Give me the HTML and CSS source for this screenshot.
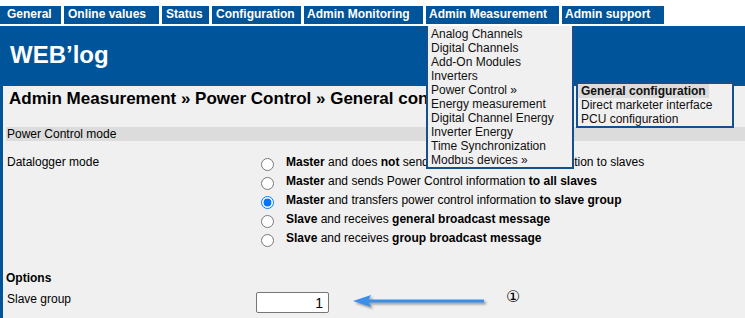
FILE: index.html
```html
<!DOCTYPE html>
<html>
<head>
<meta charset="utf-8">
<title>WEB'log</title>
<link rel="stylesheet" href="styles.css">
</head>
<body>
<nav class="tabs">
  <div class="tab t-general">General</div>
  <div class="tab t-online">Online values</div>
  <div class="tab t-status">Status</div>
  <div class="tab t-config">Configuration</div>
  <div class="tab t-monitor">Admin Monitoring</div>
  <div class="tab t-measure">Admin Measurement
    <ul class="menu">
      <li>Analog Channels</li>
      <li>Digital Channels</li>
      <li>Add-On Modules</li>
      <li>Inverters</li>
      <li class="has-sub">Power Control »
        <ul class="submenu">
          <li><span class="active">General configuration</span></li>
          <li>Direct marketer interface</li>
          <li>PCU configuration</li>
        </ul>
      </li>
      <li>Energy measurement</li>
      <li>Digital Channel Energy</li>
      <li>Inverter Energy</li>
      <li>Time Synchronization</li>
      <li>Modbus devices »</li>
    </ul>
  </div>
  <div class="tab t-support">Admin support</div>
</nav>
<div class="frame">
  <div class="brand">WEB’log</div>
  <main class="panel">
    <h1 class="title">Admin Measurement » Power Control » General configuration</h1>
    <div class="section">Power Control mode</div>
    <div class="field">
      <div class="label">Datalogger mode</div>
      <div class="options">
        <label class="opt"><input type="radio" name="mode"><span><b>Master</b> and does <b>not</b> send any Power Control information to slaves</span></label>
        <label class="opt"><input type="radio" name="mode"><span><b>Master</b> and sends Power Control information <b>to all slaves</b></span></label>
        <label class="opt"><input type="radio" name="mode" checked><span><b>Master</b> and transfers power control information <b>to slave group</b></span></label>
        <label class="opt"><input type="radio" name="mode"><span><b>Slave</b> and receives <b>general broadcast message</b></span></label>
        <label class="opt"><input type="radio" name="mode"><span><b>Slave</b> and receives <b>group broadcast message</b></span></label>
      </div>
    </div>
    <div class="subhead">Options</div>
    <div class="field">
      <div class="label">Slave group</div>
      <div class="value"><input class="num" type="text" value="1"></div>
    </div>
    <svg class="arrow" width="140" height="22" viewBox="0 0 140 22">
      <rect x="18" y="9.5" width="116" height="3" fill="#3b8fe8"/>
      <polygon points="3,11 21,5 18,11 21,17" fill="#3b8fe8"/>
    </svg>
    <span class="note">①</span>
  </main>
</div>
</body>
</html>
```

FILE: styles.css
```css
html, body {
  margin: 0;
  padding: 0;
  background: #ffffff;
  font-family: "Liberation Sans", Arial, sans-serif;
  font-size: 12px;
  color: #000;
  overflow: hidden;
}

.tabs {
  position: relative;
  z-index: 10;
  display: flex;
  gap: 3px;
  margin-top: 6px;
  height: 18px;
  margin-bottom: 2px;
}

.tab {
  position: relative;
  box-sizing: border-box;
  height: 18px;
  line-height: 16px;
  padding: 0 0 2px 4px;
  background: #00549a;
  color: #fff;
  font-weight: bold;
  white-space: nowrap;
}

.t-general { width: 61px; padding-left: 7px; }
.t-online { width: 95px; }
.t-status { width: 47px; }
.t-config { width: 89px; }
.t-monitor { width: 119px; padding-left: 3px; }
.t-measure { width: 133px; padding-left: 3px; }
.t-support { width: 102px; padding-left: 3px; }

.menu {
  position: absolute;
  top: 20px;
  left: 0;
  width: 144px;
  margin: 0;
  padding: 1px 0 0 0;
  list-style: none;
  background: #f0f0f0;
  border: 2px solid #14508f;
  border-top: 0;
  color: #111;
  font-weight: normal;
}

.menu li {
  position: relative;
  padding-left: 3px;
  line-height: normal;
}

.submenu {
  position: absolute;
  top: -1px;
  left: calc(100% + 4px);
  width: 154px;
  margin: 0;
  padding: 0;
  list-style: none;
  background: #f0f0f0;
  border: 2px solid #14508f;
}

.submenu li {
  padding-left: 0;
}

.submenu li:not(:first-child) {
  padding-left: 3px;
}

.active {
  display: inline-block;
  padding: 0 3px;
  background: #dcdcdc;
  font-weight: bold;
}

.frame {
  background: #00549a;
  padding-left: 3px;
  height: 292px;
}

.brand {
  box-sizing: border-box;
  height: 60px;
  padding: 15px 0 0 7px;
  color: #fff;
  font-size: 24px;
  font-weight: bold;
  line-height: normal;
}

.panel {
  position: relative;
  display: block;
  background: #f0f0f0;
  height: 232px;
  padding: 3px 0 0 3px;
}

.title {
  margin: 0 0 0 3px;
  font-size: 17px;
  font-weight: bold;
  line-height: normal;
  white-space: nowrap;
}

.section {
  margin-top: 17.5px;
  padding-left: 1px;
  background: #dcdcdc;
  line-height: normal;
}

.field {
  display: flex;
  align-items: flex-start;
}

.section + .field {
  margin-top: 14px;
}

.label {
  width: 249px;
  padding-left: 1px;
  line-height: normal;
}

.options {
  display: flex;
  flex-direction: column;
}

.opt {
  display: flex;
  align-items: flex-start;
  height: 19px;
  line-height: normal;
  white-space: nowrap;
}

.opt input {
  width: 13px;
  height: 13px;
  margin: 3px 12px 0 5px;
}

.subhead {
  margin-top: 21.5px;
  margin-bottom: 7px;
  padding-left: 0;
  font-weight: bold;
  line-height: normal;
}

.num {
  box-sizing: border-box;
  width: 73px;
  height: 21px;
  margin: 0;
  padding: 0 5px;
  border: 1px solid #767676;
  border-radius: 2px;
  background: #fff;
  text-align: right;
  font-family: "Liberation Sans", Arial, sans-serif;
  font-size: 14px;
  color: #000;
}

.arrow {
  position: absolute;
  left: 347px;
  top: 204px;
  filter: drop-shadow(2px 2px 1px rgba(0, 0, 0, 0.35));
}

.note {
  position: absolute;
  left: 503px;
  top: 201px;
  font-family: "DejaVu Sans", sans-serif;
  font-size: 16px;
  line-height: normal;
  color: #000;
}
```
